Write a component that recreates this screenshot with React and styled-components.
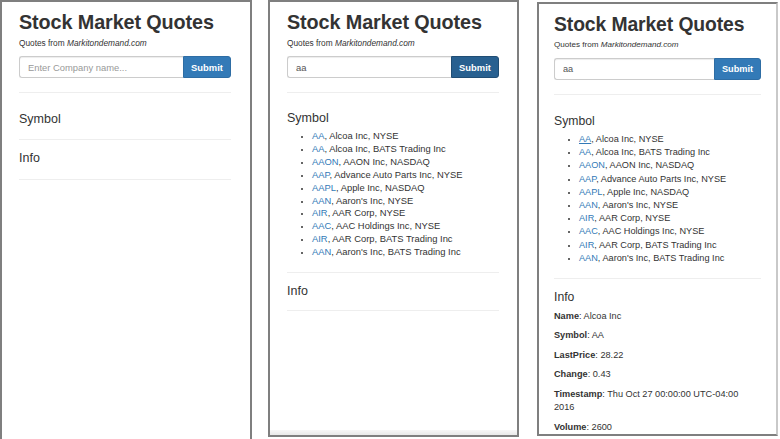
import React from 'react';
import styled, { createGlobalStyle } from 'styled-components';

const Global = createGlobalStyle`
  html, body { margin: 0; padding: 0; background: #fff; }
  body { font-family: "Liberation Sans", Arial, Helvetica, sans-serif; color: #333; overflow: hidden; }
  * { box-sizing: border-box; }
`;

const Stage = styled.div`
  display: flex;
  align-items: flex-start;
  width: 780px;
  height: 439px;
  overflow: hidden;
`;

const Panel = styled.div`
  --s: ${p => p.$scale || 1};
  --lh: ${p => p.$lh || 12.9}px;
  position: relative;
  flex: none;
  display: flex;
  flex-direction: column;
  width: ${p => p.$w}px;
  height: ${p => p.$h}px;
  margin-top: ${p => p.$top || 0}px;
  margin-left: ${p => p.$gap || 0}px;
  padding: 9px ${p => p.$pr}px 0 ${p => p.$pl}px;
  background: #fff;
  border: 2px solid #7f7f7f;
  border-bottom: ${p => (p.$open ? 'none' : '2px solid #7f7f7f')};
  border-right-color: ${p => (p.$lightRight ? '#c9c9c9' : '#7f7f7f')};
  overflow: hidden;

  ${p =>
    p.$track &&
    `&::after {
      content: '';
      position: absolute;
      left: 0; right: 0; bottom: 0;
      height: 5px;
      background: linear-gradient(#f7f7f7, #e9e9e9);
    }`}
`;

const Title = styled.h1`
  margin: 0;
  font-size: calc(19.8px * var(--s));
  line-height: 22px;
  font-weight: 700;
  color: #333;
  white-space: nowrap;
  letter-spacing: -0.1px;
`;

const Sub = styled.p`
  margin: 4px 0 0;
  font-size: calc(8.3px * var(--s));
  line-height: 12px;
  color: #333;
  white-space: nowrap;
`;

const Search = styled.form`
  display: flex;
  height: 22px;
  margin-top: 7px;
`;

const Input = styled.input`
  flex: 1;
  min-width: 0;
  height: 22px;
  margin: 0;
  padding: 0 8px;
  border: 1px solid #ccc;
  border-right: none;
  border-radius: 3px 0 0 3px;
  box-shadow: inset 0 1px 1px rgba(0, 0, 0, 0.075);
  font-family: inherit;
  font-size: calc(9.4px * var(--s));
  color: #555;
  background: #fff;
  outline: none;
  &::placeholder { color: #999; }
`;

const Button = styled.button`
  flex: none;
  width: ${p => p.$w || 48}px;
  height: 22px;
  margin: 0;
  padding: 0;
  border: 1px solid ${p => (p.$active ? '#204d74' : '#2e6da4')};
  border-radius: 0 3px 3px 0;
  background: ${p => (p.$active ? '#286090' : '#337ab7')};
  color: #fff;
  font-family: inherit;
  font-weight: 700;
  font-size: calc(9.4px * var(--s));
`;

const Rule = styled.hr`
  flex: none;
  width: 100%;
  height: 0;
  margin: ${p => p.$mt}px 0 0;
  border: 0;
  border-top: 1px solid #eee;
`;

const Heading = styled.h4`
  margin: ${p => p.$mt}px 0 0;
  font-size: calc(12.5px * var(--s));
  line-height: 14px;
  font-weight: 400;
  color: #333;
`;

const List = styled.ul`
  margin: 5px 0 0;
  padding: 0 0 0 25px;
  list-style: disc;
  font-size: calc(9.4px * var(--s));
  line-height: var(--lh);
  color: #333;
  li::marker { font-size: calc(7.5px * var(--s)); }
`;

const Ticker = styled.a`
  color: #337ab7;
  text-decoration: ${p => (p.$hover ? 'underline' : 'none')};
`;

const Facts = styled.div`
  display: flex;
  flex-direction: column;
  gap: 6.6px;
  margin-top: 5.5px;
`;

const Fact = styled.p`
  margin: 0;
  font-size: calc(9.4px * var(--s));
  line-height: 13px;
  color: #333;
  strong { font-weight: 700; }
`;

const quotes = [
  ['AA', 'Alcoa Inc, NYSE'],
  ['AA', 'Alcoa Inc, BATS Trading Inc'],
  ['AAON', 'AAON Inc, NASDAQ'],
  ['AAP', 'Advance Auto Parts Inc, NYSE'],
  ['AAPL', 'Apple Inc, NASDAQ'],
  ['AAN', "Aaron's Inc, NYSE"],
  ['AIR', 'AAR Corp, NYSE'],
  ['AAC', 'AAC Holdings Inc, NYSE'],
  ['AIR', 'AAR Corp, BATS Trading Inc'],
  ['AAN', "Aaron's Inc, BATS Trading Inc"],
];

const info = [
  ['Name', 'Alcoa Inc'],
  ['Symbol', 'AA'],
  ['LastPrice', '28.22'],
  ['Change', '0.43'],
  ['Timestamp', 'Thu Oct 27 00:00:00 UTC-04:00 2016'],
  ['Volume', '2600'],
];

function Header({ value, active, btnW }) {
  return (
    <>
      <Title>Stock Market Quotes</Title>
      <Sub>
        Quotes from <em>Markitondemand.com</em>
      </Sub>
      <Search onSubmit={e => e.preventDefault()}>
        {value ? (
          <Input defaultValue={value} readOnly />
        ) : (
          <Input placeholder="Enter Company name..." readOnly />
        )}
        <Button type="submit" $active={active} $w={btnW}>
          Submit
        </Button>
      </Search>
      <Rule $mt={14} />
    </>
  );
}

function Quotes({ hoverFirst }) {
  return (
    <List>
      {quotes.map(([sym, rest], i) => (
        <li key={i}>
          <Ticker href="#" $hover={hoverFirst && i === 0}>
            {sym}
          </Ticker>
          , {rest}
        </li>
      ))}
    </List>
  );
}

export default function App() {
  return (
    <>
      <Global />
      <Stage>
        <Panel $w={252} $h={460} $pl={17} $pr={19} $open>
          <Header />
          <Heading $mt={19}>Symbol</Heading>
          <Rule $mt={13} />
          <Heading $mt={11}>Info</Heading>
          <Rule $mt={14} />
        </Panel>

        <Panel $w={251} $h={437} $gap={16} $pl={17} $pr={18} $track>
          <Header value="aa" active />
          <Heading $mt={18}>Symbol</Heading>
          <Quotes />
          <Rule $mt={13} />
          <Heading $mt={11}>Info</Heading>
          <Rule $mt={12} />
        </Panel>

        <Panel $w={241} $h={434} $top={2} $gap={18} $pl={15} $pr={15} $scale={0.977} $lh={13.2} $lightRight>
          <Header value="aa" btnW={47} />
          <Heading $mt={19}>Symbol</Heading>
          <Quotes hoverFirst />
          <Rule $mt={13} />
          <Heading $mt={11}>Info</Heading>
          <Facts>
            {info.map(([k, v]) => (
              <Fact key={k}>
                <strong>{k}</strong>: {v}
              </Fact>
            ))}
          </Facts>
        </Panel>
      </Stage>
    </>
  );
}
